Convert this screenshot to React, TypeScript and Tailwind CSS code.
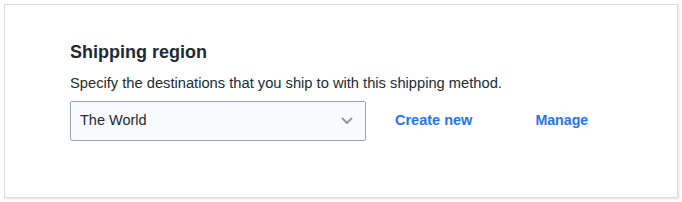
import React from 'react';

export default function App() {
  return (
    <div className="w-[682px] h-[202px] bg-white p-1" style={{ fontFamily: '"Liberation Sans", Arial, sans-serif' }}>
      <div className="h-[194px] w-[674px] border border-[#dcdcdc] bg-white shadow-[1px_1px_2px_rgba(0,0,0,0.12)] pl-[65px] pt-[35px]">
        <h2 className="text-[18px] leading-[24px] font-bold text-[#212b36]">Shipping region</h2>
        <p className="mt-[9px] text-[14.7px] leading-[20px] text-[#212b36]">
          Specify the destinations that you ship to with this shipping method.
        </p>
        <div className="mt-[8px] flex items-center">
          <div className="w-[296px] h-[40px] border border-[#95a7b7] rounded-[2px] bg-[#f8fafb] flex items-center justify-between pl-[9px] pr-[12px]">
            <span className="text-[14.5px] text-[#212b36]">The World</span>
            <svg width="12" height="8" viewBox="0 0 12 8" fill="none">
              <path d="M1.5 1.5 L6 6 L10.5 1.5" stroke="#8a99a8" strokeWidth="1.8" strokeLinecap="round" strokeLinejoin="round" />
            </svg>
          </div>
          <a className="ml-[29px] text-[14.5px] font-bold text-[#1f75f0] cursor-pointer">Create new</a>
          <a className="ml-[63px] text-[14.2px] font-bold text-[#1f75f0] cursor-pointer">Manage</a>
        </div>
      </div>
    </div>
  );
}
